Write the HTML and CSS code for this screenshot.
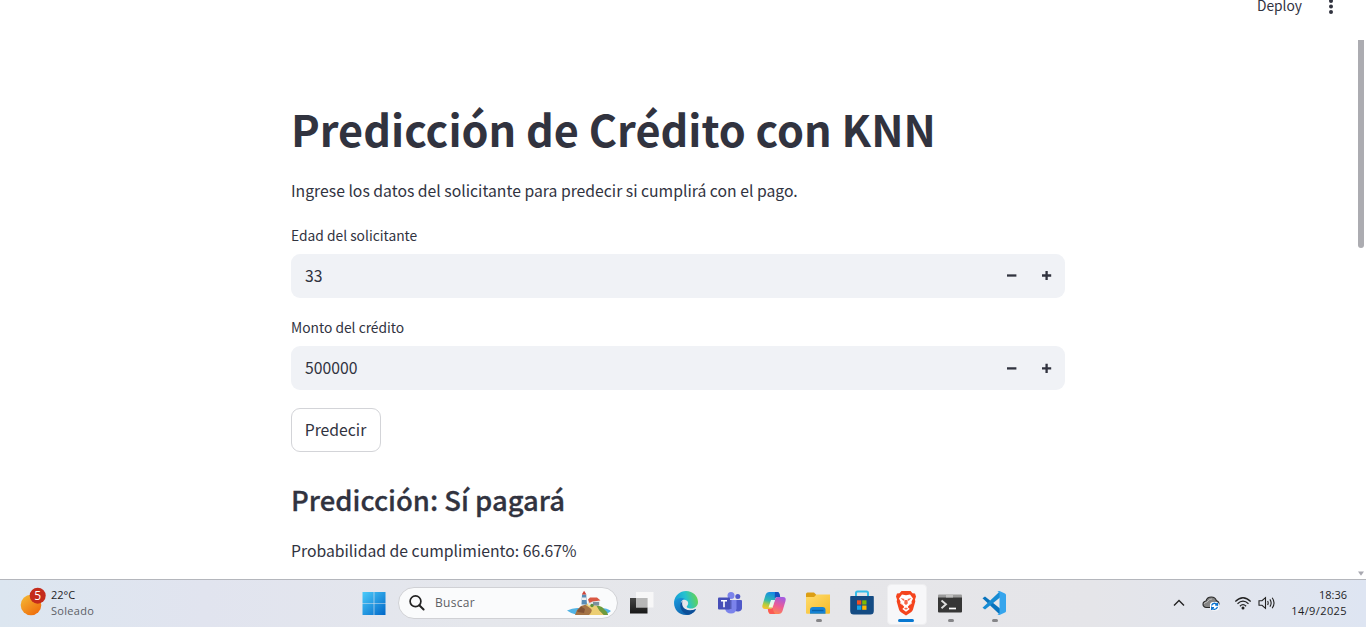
FILE: index.html
```html
<!DOCTYPE html>
<html lang="es">
<head>
<meta charset="utf-8">
<title>Predicción de Crédito con KNN</title>
<link rel="stylesheet" href="styles.css">
</head>
<body>
<div class="screen">
  <div class="app">
    <header class="toolbar">
      <span class="deploy">Deploy</span>
      <svg class="kebab" width="6" height="16" viewBox="0 0 6 16"><g fill="#31333f"><circle cx="3" cy="2" r="2"/><circle cx="3" cy="7.6" r="2"/><circle cx="3" cy="13.1" r="2"/></g></svg>
    </header>
    <main class="content">
      <h1 class="title">Predicción de Crédito con KNN</h1>
      <p class="intro">Ingrese los datos del solicitante para predecir si cumplirá con el pago.</p>
      <div class="field">
        <span class="label">Edad del solicitante</span>
        <div class="number"><span class="value">33</span>
          <svg class="step" width="35" height="44" viewBox="0 0 35 44"><path d="M12 21.5h9.4" stroke="#31333f" stroke-width="2.3"/></svg>
          <svg class="step" width="35" height="44" viewBox="0 0 35 44"><path d="M12 21.5h9.2M16.6 16.9v9.2" stroke="#31333f" stroke-width="2.3"/></svg>
        </div>
      </div>
      <div class="field second">
        <span class="label">Monto del crédito</span>
        <div class="number"><span class="value low">500000</span>
          <svg class="step" width="35" height="44" viewBox="0 0 35 44"><path d="M12 22.4h9.4" stroke="#31333f" stroke-width="2.3"/></svg>
          <svg class="step" width="35" height="44" viewBox="0 0 35 44"><path d="M12 22.4h9.2M16.6 17.8v9.2" stroke="#31333f" stroke-width="2.3"/></svg>
        </div>
      </div>
      <button class="predict">Predecir</button>
      <h3 class="result">Predicción: Sí pagará</h3>
      <p class="prob">Probabilidad de cumplimiento: 66.67%</p>
    </main>
    <div class="scroll-thumb"></div>
    <svg class="scroll-arrow" width="6" height="5" viewBox="0 0 6 5"><path d="M0 .5h6L3 4.8z" fill="#a8a8b0"/></svg>
  </div>

  <footer class="taskbar">
    <div class="weather">
      <svg width="28" height="32" viewBox="0 0 28 32">
        <defs><linearGradient id="sun" x1="0" y1="0" x2=".8" y2="1"><stop offset="0" stop-color="#f4bd37"/><stop offset="1" stop-color="#ef6a0b"/></linearGradient></defs>
        <circle cx="12" cy="18" r="10.3" fill="url(#sun)"/><circle cx="18.7" cy="8.7" r="8" fill="#c42b1c"/>
        <text x="18.7" y="12.6" class="badge-text" text-anchor="middle">5</text>
      </svg>
      <div class="weather-text"><span>22°C</span><span class="muted">Soleado</span></div>
    </div>
    <div class="apps">
      <span class="slot">
        <svg width="24" height="24" viewBox="0 0 24 24"><defs><linearGradient id="win" x1="0" y1="0" x2="1" y2="1" ><stop offset="0" stop-color="#4bcbfa"/><stop offset="1" stop-color="#0067c8"/></linearGradient></defs><path d="M.5 1h11.2v11.200H.5zM12.300 1h11.200v11.200H12.300zM.5 12.800h11.200V24H.5zM12.300 12.800h11.200V24H12.300z" fill="url(#win)"/></svg>
      </span>
      <div class="search">
        <svg width="18" height="18" viewBox="0 0 18 18"><circle cx="7.5" cy="7.3" r="5.4" fill="none" stroke="#222" stroke-width="1.7"/><path d="M11.3 11.3l4.3 4.2" stroke="#222" stroke-width="2" stroke-linecap="round"/></svg>
        <span class="search-text">Buscar</span>
        <svg class="island" width="46" height="26" viewBox="0 0 46 26">
          <path d="M1 20.500q6-3 12-2.500h22q6 0 10 3-3 3-9 3.500H10Q4 23 1 20.500z" fill="#52b4e5"/>
          <path d="M9 25l2-5 4-4 5-1.500 9 .5 8 4 5 6z" fill="#a57446"/>
          <path d="M19 14.500q5-2 10-.5l6 3-2 3 5 5H23q5-5 1-7z" fill="#ecce72"/>
          <path d="M30 15l6 2 5 5 1 3h-4l-5-5z" fill="#6d9b3d"/>
          <path d="M11 21l4-4.500 4 2.500-1 4-6-1z" fill="#825335"/>
          <path d="M22 10h9l3 1.500v4H22z" fill="#e3e7e6"/><path d="M22 9.500l2-2 7 0 3.500 3-8 1-3 1.500z" fill="#d95843"/>
          <path d="M16 4.500h4.200l.8 10h-5.500z" fill="#598cb6"/><path d="M16 7.500h4.400v2.500H16z" fill="#eee"/><path d="M15.800 4.500L18.100.8l2.300 3.700z" fill="#cf4439"/>
          <path d="M27 12h6v3.500h-6z" fill="#7d909d"/><circle cx="26" cy="15.500" r="1.700" fill="#5f903b"/>
        </svg>
      </div>
      <span class="slot taskview">
        <svg width="26" height="24" viewBox="0 0 26 24"><defs><linearGradient id="tv" x1="0" y1="0" x2="0" y2="1"><stop offset="0" stop-color="#444"/><stop offset="1" stop-color="#171717"/></linearGradient></defs><rect x="1" y="7" width="17.5" height="15.5" fill="url(#tv)"/><rect x="7" y="1" width="17.5" height="15.5" fill="#fafafa" opacity=".82"/><path d="M7 7h11.5v9.5H7z" fill="#aaa" opacity=".72"/></svg>
      </span>
      <span class="slot">
        <svg width="26" height="26" viewBox="0 0 26 26"><defs><linearGradient id="ed1" x1="0" y1=".5" x2="1" y2=".3"><stop offset="0" stop-color="#159bd7"/><stop offset=".5" stop-color="#25c2cf"/><stop offset="1" stop-color="#68d54a"/></linearGradient><linearGradient id="ed2" x1="0" y1="0" x2="1" y2="1"><stop offset="0" stop-color="#1b9ade"/><stop offset="1" stop-color="#0c509b"/></linearGradient></defs>
        <path d="M1 12C2 5 7 1 13 1c7 0 12 5 12 11 0 4-3 6.5-7 6.5-3 0-5-1-4-2.5 2-2 1.500-5-1.500-6C8 8.500 3 9 1 13z" fill="url(#ed1)"/><path d="M1 12.500C3 8 8 7 12 9c-5 1-5 6-1.500 9 3.500 3 8.500 3 12.500 1-2 4-6 6-10 6C6 25 1 20 1 12.500z" fill="url(#ed2)"/><path d="M9.500 11C5 15 8 23 15 24.800c3.500-.3 7-3 8-5.800-5 2.500-10 1.500-12.200-1-1.800-2-2-5-1.300-7z" fill="#0d4f98"/></svg>
      </span>
      <span class="slot">
        <svg width="26" height="24" viewBox="0 0 26 24"><circle cx="20.800" cy="5.500" r="2.500" fill="#5059c9"/><path d="M17 9h7q1 0 1 1v6a4 4 0 0 1-8 1z" fill="#5059c9"/><circle cx="14" cy="4.500" r="3.500" fill="#7b83eb"/><path d="M8 9h11.500v8.500q-.5 5-5.500 5-5 0-6-5z" fill="#7b83eb"/><path d="M8 9h6.500v9H8z" fill="#555cb8"/><rect x="1" y="6.500" width="12" height="12" rx="1" fill="#464eb8"/><path d="M4 9.700h6M7 9.700v6.500" stroke="#fff" stroke-width="1.600"/></svg>
      </span>
      <span class="slot">
        <svg width="26" height="24" viewBox="0 0 26 24"><defs><linearGradient id="cp1" x1=".5" y1="0" x2=".2" y2="1"><stop offset="0" stop-color="#148ae5"/><stop offset=".5" stop-color="#31b9ae"/><stop offset=".75" stop-color="#b3cd3b"/><stop offset="1" stop-color="#fcc12d"/></linearGradient><linearGradient id="cp2" x1=".7" y1="0" x2=".3" y2="1"><stop offset="0" stop-color="#a45be0"/><stop offset=".5" stop-color="#ed5b94"/><stop offset="1" stop-color="#ff8d48"/></linearGradient></defs>
        <path d="M8.500 1h8q1.500 0 2 2l.7 3h-2.500q-2 0-2.500 2l-2.500 8q-.8 2-2.700 2H4Q.5 18 1.500 14l3-10Q5.500 1 8.500 1z" fill="url(#cp1)"/><path d="M14 1h2.500q1.500 0 2 2l.7 3h-3q-2 0-2.500 1z" fill="#1550bd"/><path d="M17.500 23h-8q-1.500 0-2-2l-.7-3H9q2 0 2.700-2l2.500-8q.8-2 2.500-2H22q3.500 0 2.500 4l-3 10q-1 3-4 3z" fill="url(#cp2)"/><path d="M10 9h4l-2.500 7.500H7.500z" fill="#fff" opacity=".85"/><path d="M10 23q-2 0-2.500-2l-.7-3H9q1.500 0 2.500-1l1 3q.5 2 2 3z" fill="#fb5a55"/></svg>
      </span>
      <span class="slot running">
        <svg width="26" height="24" viewBox="0 0 26 24"><defs><linearGradient id="fo" x1="0" y1="0" x2="1" y2="1"><stop offset="0" stop-color="#ffdc6d"/><stop offset="1" stop-color="#f6bb29"/></linearGradient></defs><path d="M1 3q0-1.500 1.500-1.500H9l2.500 2.500v5H1z" fill="#dc9e14"/><path d="M1 6h8l2.500-2.500H25V22q0 .8-1 .8H2q-1 0-1-.8z" fill="url(#fo)"/><path d="M5 22.800V19q0-3 3-3h9.500q3 0 3 3v3.800z" fill="#1683d6"/><path d="M7 19.500h11.500" stroke="#0862a8" stroke-width="1.400"/></svg>
      </span>
      <span class="slot">
        <svg width="26" height="26" viewBox="0 0 26 26"><path d="M7 8V3q0-1.500 1.500-1.500h9Q19 1.500 19 3v5" fill="none" stroke="#35bde9" stroke-width="2"/><path d="M2 6h22q.8 0 .8 1v14q0 3.500-3.500 3.500H4.700Q1.200 24.500 1.200 21V7q0-1 .8-1z" fill="#144b83"/><path d="M8 10.300h4.300v4.300H8z" fill="#f25022"/><path d="M13.200 10.300h4.300v4.300h-4.300z" fill="#7fba00"/><path d="M8 15.500h4.300v4.300H8z" fill="#13a5eb"/><path d="M13.200 15.500h4.300v4.300h-4.300z" fill="#ffb900"/></svg>
      </span>
      <span class="slot active">
        <svg width="22" height="26" viewBox="0 0 22 26"><path d="M6.500 1h9l2 2.200 2.500.4 1 3-1 3 .3 2-2.300 8q-.5 1.700-2 2.700L11 25.500l-5-3.200q-1.500-1-2-2.700l-2.300-8 .3-2-1-3 1-3 2.500-.4z" fill="#f5441d"/><path d="M7 4.500l4 .8 4-.8 3 4-1.500 3 .2 2-4 3.500 2 2-3.700 2.700L7.300 19l2-2-4-3.500.2-2L4 8.500z" fill="#fff"/><path d="M5.500 8l4 .9-1 2.200zM16.500 8l-4 .9 1 2.200zM9.500 10h3l.3 3.600L11 15l-1.800-1.400zM6 13l3 3.500-1 1zM16 13l-3 3.500 1 1zM9 18.500l2-1 2 1-2 1.300z" fill="#f5441d" opacity=".8"/></svg>
      </span>
      <span class="slot running">
        <svg width="26" height="24" viewBox="0 0 26 24"><path d="M1 5h24v15.500q0 1-1 1H2q-1 0-1-1z" fill="#363636"/><path d="M1 6.500V4.500q0-1 1-1h22q1 0 1 1v2z" fill="#9b9b9b"/><path d="M9 3.500h7v3H9z" fill="#c0c0c0"/><path d="M4.500 9.500L9 13.300l-4.500 4" fill="none" stroke="#ddd" stroke-width="1.900"/><path d="M12 17.500h7" stroke="#fff" stroke-width="1.700"/></svg>
      </span>
      <span class="slot running">
        <svg width="26" height="26" viewBox="0 0 26 26"><path d="M1.500 8.200L4 6.400l15 12v6.400z" fill="#0873bd"/><path d="M1.500 17.800L4 19.600l15-12V1.200z" fill="#168bd3"/><path d="M18.500 1l5.500 2.500q1 .5 1 1.500v16q0 1-1 1.500L18.500 25q-1.300.2-2-.8l2-1V2.800l-2-1q.7-1 2-.8z" fill="#36a5ed"/></svg>
      </span>
    </div>
    <div class="tray">
      <svg class="chevron" width="14" height="10" viewBox="0 0 14 10"><path d="M2 7.500l5-5 5 5" fill="none" stroke="#222" stroke-width="1.400"/></svg>
      <svg class="cloud" width="18" height="16" viewBox="0 0 18 16"><path d="M4.500 12.500Q1 12 1 9.200 1 6.500 4 6q1-4 5.300-4 4 0 5 3.500Q17 6.500 17 9l-3 3.500z" fill="#858585" stroke="#282828" stroke-width="1.100"/><path d="M2 9q.5-2 3-2 2-3 5-3" stroke="#bbb" fill="none"/><rect x="8" y="7" width="9" height="8.500" rx="3" fill="#fff"/><path d="M9.500 10.500q1-2.500 3.500-2.200 1.500.2 2.500 1.500V7.700M15.500 12q-1 2.500-3.300 2.300-1.500 0-2.500-1.500v2.300M15.500 10h-2.300M9.700 12.700H12" fill="none" stroke="#0872cf" stroke-width="1.300"/></svg>
      <svg class="wifi" width="18" height="16" viewBox="0 0 18 16"><g fill="none" stroke="#222" stroke-width="1.200"><path d="M1.300 6.500q7.700-7.500 15.400 0M3.500 8.800q5.500-5.300 11 0M5.900 11.200q3.100-3 6.200 0"/></g><circle cx="9" cy="13" r="1.500" fill="#222"/></svg>
      <svg class="volume" width="18" height="16" viewBox="0 0 18 16"><g fill="none" stroke="#222" stroke-width="1.100"><path d="M1 5.700h3L7.500 2.600v10.800L4 10.300H1zM9.600 6q1.200 2 0 4M11.900 4.400q2.500 3.600 0 7.200M14.200 2.800q3.700 5.200 0 10.400"/></g></svg>
      <div class="clock"><span>18:36</span><span class="date">14/9/2025</span></div>
    </div>
  </footer>
</div>
</body>
</html>
```
FILE: styles.css
```css
* { box-sizing: border-box; }
body { margin: 0; background: #fff; }
.screen { width: 1366px; height: 627px; overflow: hidden; display: flex; flex-direction: column; }
.app {
  position: relative; height: 579px; overflow: hidden;
  color: #31333f; font-family: "Noto Sans CJK JP", "Noto Sans", sans-serif; font-size: 15.75px;
}
.app svg, .taskbar svg { display: block; flex: none; }
.toolbar { height: 40px; display: flex; justify-content: flex-end; align-items: flex-start; padding-right: 32px; gap: 26px; }
.deploy { font-size: 13.8px; line-height: 10px; }
.kebab { margin-top: -1px; }
.content { width: 774px; margin-left: 291px; display: flex; flex-direction: column; align-items: flex-start; }
.title { margin: 59px 0 0; font-size: 43.2px; line-height: 58px; font-weight: 700; white-space: nowrap; }
.intro { margin: 21px 0 0; line-height: 26px; white-space: nowrap; }
.field { width: 100%; margin-top: 20px; display: flex; flex-direction: column; }
.second { margin-top: 18px; }
.label { font-size: 13.8px; line-height: 22px; height: 30px; }
.number { height: 44px; border-radius: 9px; background: #f0f2f6; display: flex; align-items: center; padding: 0 0 0 14px; }
.value { flex: 1; padding-bottom: 2px; }
.low { padding-bottom: 1px; }
.predict {
  margin: 18px 0 0; width: 90px; height: 44px; padding: 0 1px 2px 0; border: 1px solid #d3d4d8; border-radius: 9px;
  background: #fff; color: inherit; font: inherit;
}
.result { margin: 26px 0 0; font-size: 27.45px; line-height: 42px; font-weight: 500; -webkit-text-stroke: .3px #31333f; white-space: nowrap; }
.prob { margin: 18px 0 0; line-height: 26px; }
.scroll-thumb { position: absolute; left: 1358px; top: 40px; width: 6px; height: 208px; border-radius: 0 0 3px 3px; background: #acacb1; }
.scroll-arrow { position: absolute; left: 1358px; top: 571px; }

.taskbar {
  height: 48px; border-top: 1px solid #b4b6bc; display: flex; align-items: center; justify-content: space-between;
  padding-bottom: 2px;
  background: linear-gradient(90deg, #dce6f0 0, #e1e4ef 15%, #e5e7ec 35%, #e6e6e9 60%, #e5e5e9 80%, #dee5f2 100%);
  color: #1d1d1f; font-family: "Open Sans", "Noto Sans", sans-serif; font-size: 11px;
}
.weather { width: 332px; padding-left: 19px; display: flex; gap: 4px; align-items: center; }
.badge-text { font-size: 12px; fill: #fff; }
.weather-text, .clock { display: flex; flex-direction: column; line-height: 16px; }
.muted { color: #5c5f66; letter-spacing: .3px; }
.apps { display: flex; align-items: center; width: 664px; margin-left: 20px; }
.slot { position: relative; width: 44px; height: 45px; display: flex; align-items: center; justify-content: center; flex: none; }
.slot::before { content: ""; position: absolute; }
.taskview { padding-right: 1px; }
.search {
  width: 220px; height: 32px; margin: 0 2px; flex: none; border: 1px solid #d0d1d5; border-radius: 16px;
  background: #fafbfc; display: flex; align-items: center; padding: 0 5px 0 9px;
}
.search-text { margin-left: 9px; flex: 1; font-size: 12px; letter-spacing: .3px; color: #5e6064; }
.running::before { left: 20px; bottom: 3px; width: 6px; height: 3px; border-radius: 2px; background: #858588; }
.active::after { content: ""; position: absolute; left: 3px; top: 4px; width: 38px; height: 39px; border-radius: 4px; background: #f7f7f9; border: 1px solid #eeeef0; }
.active svg { position: relative; z-index: 1; }
.active::before { left: 14px; bottom: 3px; width: 16px; height: 3px; border-radius: 2px; background: #0878d1; z-index: 1; }
.tray { flex: 1; display: flex; align-items: center; justify-content: flex-end; padding-right: 19px; }
.cloud { margin-left: 16px; }
.wifi { margin-left: 14px; }
.volume { margin-left: 6px; }
.clock { margin-left: 15px; text-align: right; }
.date { letter-spacing: .4px; }
```
